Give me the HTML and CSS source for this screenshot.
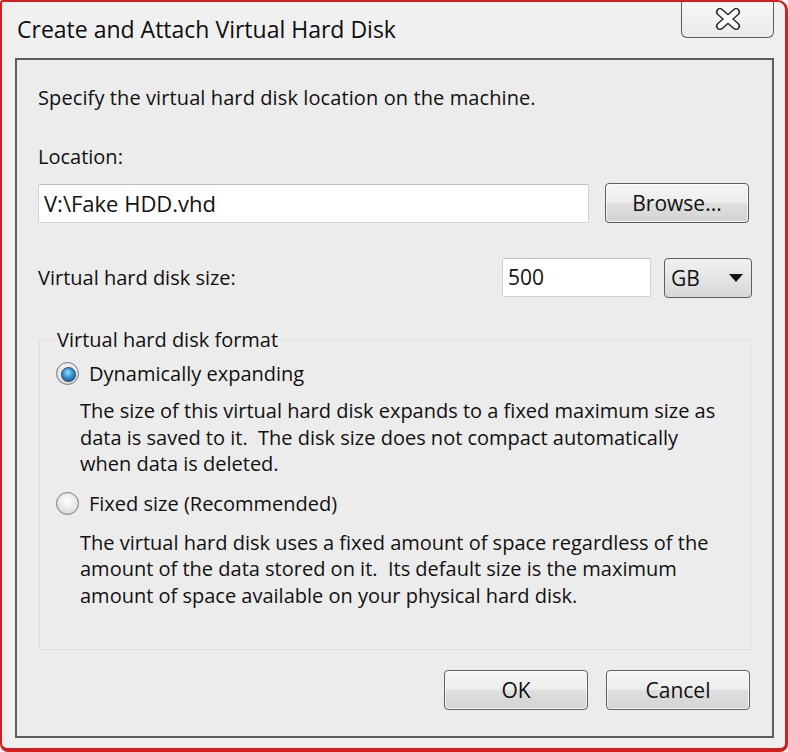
FILE: index.html
```html
<!DOCTYPE html>
<html>
<head>
<meta charset="utf-8">
<link rel="stylesheet" href="styles.css">
</head>
<body>
<div class="window">
  <div class="titlebar">
    <div class="title">Create and Attach Virtual Hard Disk</div>
    <div class="close">
      <svg width="26" height="22" viewBox="0 0 26 22">
        <path d="M5 4 L21 18 M21 4 L5 18" stroke="#2a2a2a" stroke-width="8" stroke-linecap="round" fill="none"/>
        <path d="M5 4 L21 18 M21 4 L5 18" stroke="#ffffff" stroke-width="5" stroke-linecap="round" fill="none"/>
      </svg>
    </div>
  </div>
  <div class="panel">
    <p class="intro">Specify the virtual hard disk location on the machine.</p>
    <p class="loc-label">Location:</p>
    <div class="loc-row">
      <div class="field field-loc">V:\Fake HDD.vhd</div>
      <div class="btn btn-browse">Browse...</div>
    </div>
    <div class="size-row">
      <span class="size-label">Virtual hard disk size:</span>
      <div class="field field-size">500</div>
      <div class="select">
        <span>GB</span>
        <svg width="14" height="8" viewBox="0 0 14 8"><path d="M0 0 H14 L7 8 Z" fill="#111"/></svg>
      </div>
    </div>
    <fieldset class="group">
      <legend>Virtual hard disk format</legend>
      <div class="option"><span class="radio checked"></span><span>Dynamically expanding</span></div>
      <p class="desc desc-1">The size of this virtual hard disk expands to a fixed maximum size as<br>data is saved to it.&nbsp; The disk size does not compact automatically<br>when data is deleted.</p>
      <div class="option option-2"><span class="radio"></span><span>Fixed size (Recommended)</span></div>
      <p class="desc desc-2">The virtual hard disk uses a fixed amount of space regardless of the<br>amount of the data stored on it.&nbsp; Its default size is the maximum<br>amount of space available on your physical hard disk.</p>
    </fieldset>
    <div class="actions">
      <div class="btn btn-action">OK</div>
      <div class="btn btn-action">Cancel</div>
    </div>
  </div>
</div>
</body>
</html>
```

FILE: styles.css
```css
* { box-sizing: border-box; }
html, body { margin: 0; padding: 0; background: #ffffff; }
body {
  font-family: "Open Sans", "Liberation Sans", Arial, sans-serif;
  font-size: 20px;
  color: #111;
}
p { margin: 0; }

.window {
  width: 788px;
  height: 752px;
  background: #f0f0f0;
  border-style: solid;
  border-color: #d21f1f;
  border-width: 2px 3px 4px 2px;
  border-radius: 3px 10px 8px 8px;
  display: flex;
  flex-direction: column;
}

.titlebar {
  height: 56px;
  display: flex;
  justify-content: space-between;
  align-items: flex-start;
  padding-left: 15px;
  padding-right: 11px;
}
.title {
  font-size: 23px;
  line-height: 28px;
  margin-top: 13px;
  color: #0e0e0e;
}
.close {
  width: 93px;
  height: 36px;
  border: 1px solid #5a5a5a;
  border-top: none;
  border-radius: 0 0 6px 6px;
  background: linear-gradient(#f6f6f6, #ebebeb);
  display: flex;
  align-items: center;
  justify-content: center;
  padding-bottom: 2px;
}

.panel {
  margin-left: 13px;
  width: 759px;
  height: 680px;
  border: 2px solid #5d5d5d;
  background: #ececec;
  padding: 0 21px;
}

.intro {
  line-height: 26px;
  margin-top: 25px;
  letter-spacing: 0.1px;
}
.loc-label {
  line-height: 26px;
  margin-top: 33px;
}
.loc-row {
  margin-top: 13px;
  display: flex;
  gap: 16px;
  height: 40px;
  align-items: flex-start;
}
.field {
  background: #ffffff;
  border: 1px solid #d2d2d2;
  border-top-color: #bdbdbd;
  border-radius: 2px;
  height: 39px;
  display: flex;
  align-items: center;
  padding-left: 5px;
  padding-bottom: 1px;
  font-size: 21px;
}
.field-loc {
  width: 551px;
  margin-top: 1px;
  font-size: 22px;
}
.btn {
  border: 1px solid #5e5e5e;
  border-radius: 4px;
  background: linear-gradient(#f5f5f5 0%, #ededed 48%, #dedede 52%, #d4d4d4 100%);
  display: flex;
  align-items: center;
  justify-content: center;
  box-shadow: inset 0 0 0 1px rgba(255,255,255,0.7);
  font-size: 21px;
}
.btn-browse {
  width: 144px;
  height: 40px;
}

.size-row {
  margin-top: 34px;
  display: flex;
  align-items: center;
  height: 41px;
}
.size-label {
  flex: 1;
}
.field-size {
  width: 149px;
  margin-right: 13px;
}
.select {
  width: 88px;
  height: 40px;
  margin-top: 1px;
  margin-right: -1px;
  border: 1px solid #5e5e5e;
  border-radius: 4px;
  background: linear-gradient(#f0f0f0 0%, #e6e6e6 50%, #d6d6d6 100%);
  display: flex;
  align-items: center;
  justify-content: space-between;
  padding: 0 8px 0 6px;
  font-size: 21px;
}

.group {
  margin: 29px 0 0 1px;
  width: 713px;
  border: 1px solid #dddddd;
  border-right-color: #e6e6e6;
  border-top-color: #e2e2e2;
  padding: 0 17px 40px 17px;
  min-width: 0;
}
.group legend {
  padding: 0;
  line-height: 26px;
  margin-left: 0;
}
.option {
  display: flex;
  align-items: center;
  height: 26px;
  margin-top: 7px;
  margin-left: -1px;
}
.option-2 {
  margin-top: 13px;
}
.radio {
  width: 23px;
  height: 23px;
  border-radius: 50%;
  border: 1px solid #7b7b7b;
  background: radial-gradient(circle at 50% 40%, #ffffff 0%, #e6e6e6 55%, #c4c4c4 100%);
  margin-right: 10px;
  position: relative;
  flex: none;
}
.radio.checked::after {
  content: "";
  position: absolute;
  left: 4px;
  top: 4px;
  width: 13px;
  height: 13px;
  border-radius: 50%;
  border: 1px solid #1d3d63;
  background: radial-gradient(circle at 45% 35%, #9be0ff 0%, #3a9ad8 40%, #124a86 100%);
}
.desc {
  margin-left: 23px;
  line-height: 26.5px;
}
.desc-1 { margin-top: 12px; }
.desc-2 { margin-top: 13px; }

.actions {
  margin-top: 20px;
  display: flex;
  justify-content: flex-end;
  gap: 18px;
  margin-right: 1px;
}
.btn-action {
  width: 144px;
  height: 40px;
}
```
